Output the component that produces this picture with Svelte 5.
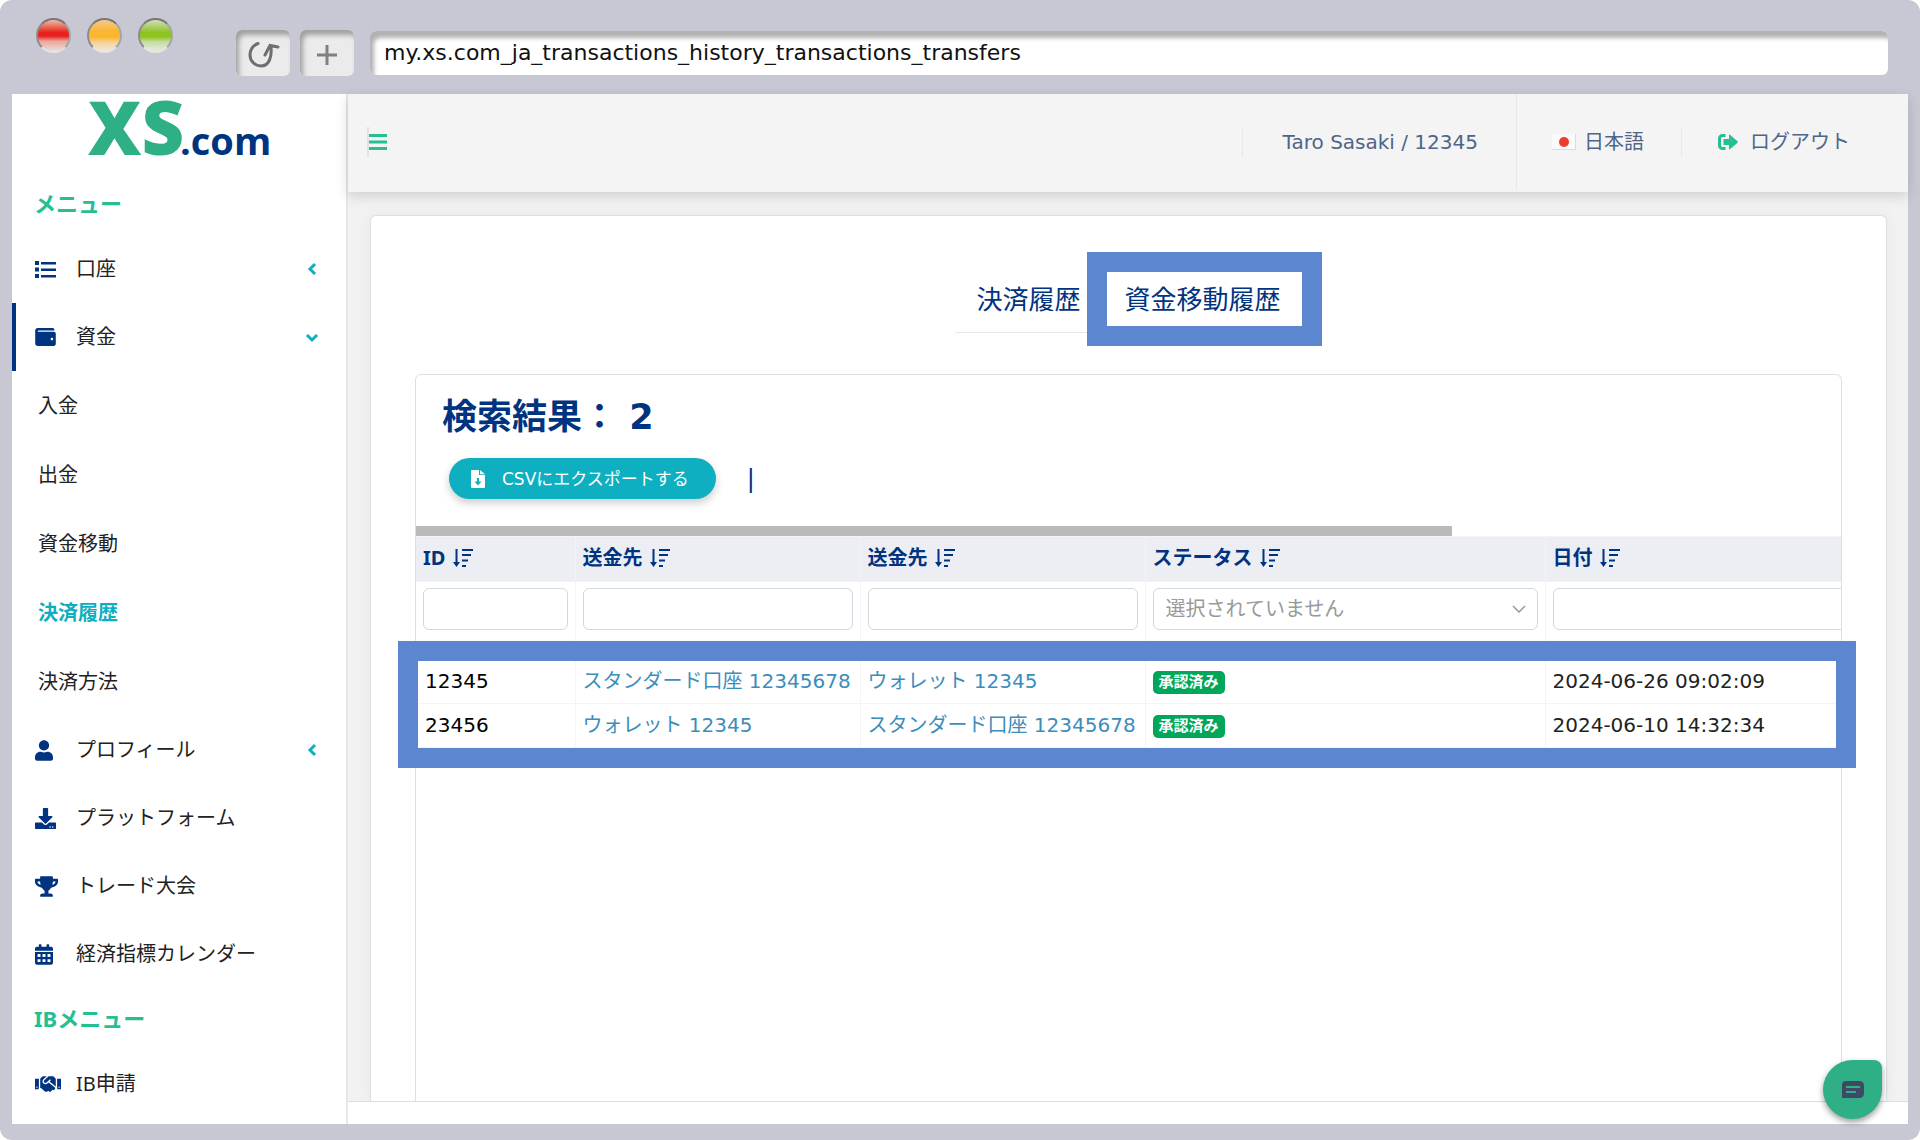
<script lang="ts">
  type Icon = { box: string; width: number; height: number; d: string };

  const icons: Record<string, Icon> = {
    list: {
      box: '0 0 21 17', width: 21, height: 17,
      d: 'M0 0h4v4H0zM6 1h15v2.500H6zM0 6.500h4v4H0zM6 7.500h15v2.500H6zM0 13h4v4H0zM6 14h15v2.500H6z',
    },
    wallet: {
      box: '0 32 512 448', width: 21, height: 18,
      d: 'M461.200 128H80c-8.840 0-16-7.160-16-16s7.160-16 16-16h384c8.840 0 16-7.160 16-16 0-26.510-21.490-48-48-48H64C28.650 32 0 60.650 0 96v320c0 35.350 28.650 64 64 64h397.200c28.020 0 50.800-21.530 50.800-48V176c0-26.470-22.780-48-50.800-48zM416 336c-17.670 0-32-14.330-32-32s14.330-32 32-32 32 14.330 32 32-14.330 32-32 32z',
    },
    user: {
      box: '0 0 448 512', width: 18, height: 21,
      d: 'M224 256c70.700 0 128-57.300 128-128S294.700 0 224 0 96 57.300 96 128s57.300 128 128 128zm89.600 32h-16.700c-22.200 10.200-46.900 16-72.900 16s-50.600-5.800-72.900-16h-16.700C60.200 288 0 348.200 0 422.400V464c0 26.500 21.500 48 48 48h352c26.500 0 48-21.500 48-48v-41.600c0-74.200-60.200-134.400-134.400-134.400z',
    },
    download: {
      box: '0 0 512 512', width: 21, height: 21,
      d: 'M216 0h80c13.300 0 24 10.700 24 24v168h87.700c17.800 0 26.700 21.500 14.100 34.100L269.700 378.300c-7.500 7.500-19.800 7.500-27.300 0L90.100 226.100c-12.600-12.600-3.700-34.100 14.100-34.100H192V24c0-13.300 10.700-24 24-24zm296 376v112c0 13.300-10.700 24-24 24H24c-13.300 0-24-10.700-24-24V376c0-13.300 10.700-24 24-24h146.700l49 49c20.100 20.100 52.500 20.100 72.600 0l49-49H488c13.300 0 24 10.700 24 24zm-124 88c0-11-9-20-20-20s-20 9-20 20 9 20 20 20 20-9 20-20zm64 0c0-11-9-20-20-20s-20 9-20 20 9 20 20 20 20-9 20-20z',
    },
    trophy: {
      box: '0 0 576 512', width: 23, height: 21,
      d: 'M552 64H448V24c0-13.300-10.700-24-24-24H152c-13.300 0-24 10.700-24 24v40H24C10.700 64 0 74.700 0 88v56c0 35.700 22.500 72.400 61.900 100.700 31.500 22.700 69.800 37.100 110 41.700C203.300 338.500 240 360 240 360v72h-48c-35.300 0-64 20.700-64 56v12c0 6.600 5.400 12 12 12h296c6.600 0 12-5.400 12-12v-12c0-35.300-28.700-56-64-56h-48v-72s36.700-21.500 68.100-73.600c40.300-4.600 78.600-19 110-41.700 39.300-28.300 61.900-65 61.900-100.700V88c0-13.300-10.700-24-24-24zM99.300 192.800C74.900 175.200 64 155.600 64 144v-16h64.200c1 32.600 5.800 61.200 12.800 86.200-15.100-5.200-29.200-12.400-41.700-21.400zM512 144c0 16.100-17.700 36.100-35.300 48.800-12.500 9-26.700 16.200-41.800 21.400 7-25 11.800-53.600 12.800-86.200H512v16z',
    },
    calendar: {
      box: '0 0 448 512', width: 18, height: 21,
      d: 'M0 192h448v272c0 26.500-21.500 48-48 48H48c-26.500 0-48-21.500-48-48zM64 244v72h72v-72zM188 244v72h72v-72zM312 244v72h72v-72zM64 372v72h72v-72zM188 372v72h72v-72zM312 372v72h72v-72zM400 64h-48V16c0-8.800-7.200-16-16-16h-32c-8.800 0-16 7.200-16 16v48H160V16c0-8.800-7.200-16-16-16h-32c-8.800 0-16 7.200-16 16v48H48C21.500 64 0 85.500 0 112v48h448v-48c0-26.500-21.500-48-48-48z',
    },
    handshake: {
      box: '0 64 640 384', width: 26, height: 16,
      d: 'M434.700 64h-85.900c-8 0-15.700 3-21.600 8.400l-98.300 90c-.1.1-.2.3-.3.4-16.600 15.600-16.300 40.500-2.100 56 12.700 13.900 39.400 17.600 56.100 2.700.1-.1.3-.1.4-.2l79.900-73.200c6.500-5.900 16.700-5.500 22.600 1 6 6.500 5.500 16.600-1 22.600l-26.100 23.900L504 313.800c2.900 2.400 5.500 5 7.900 7.700V128l-54.600-54.600c-5.900-6-14.100-9.400-22.600-9.400zM544 128.200v223.900c0 17.700 14.300 32 32 32h64V128.200h-96zm48 223.900c-8.800 0-16-7.200-16-16s7.200-16 16-16 16 7.200 16 16-7.200 16-16 16zM0 384h64c17.700 0 32-14.300 32-32V128.200H0V384zm48-63.900c8.800 0 16 7.200 16 16s-7.200 16-16 16-16-7.200-16-16c0-8.900 7.200-16 16-16zm435.900 18.600L334.600 217.500l-30 27.500c-29.700 27.100-75.200 24.500-101.700-4.400-26.900-29.400-24.800-74.900 4.400-101.700L289.100 64h-83.800c-8.500 0-16.600 3.400-22.600 9.400L128 128v223.900h18.300l90.500 81.900c27.400 22.300 67.700 18.100 90-9.300l.2-.2 17.900 15.500c15.900 13 39.400 10.500 52.300-5.400l31.400-38.600 5.400 4.400c13.700 11.100 33.900 9.100 45-4.700l9.500-11.700c11.200-13.800 9.100-33.900-4.600-45.100z',
    },
  };

  type MenuItem = {
    label: string;
    icon?: string;
    open?: boolean;
    sub?: boolean;
    current?: boolean;
  };

  const menu: MenuItem[] = [
    { label: '口座', icon: 'list', open: false },
    { label: '資金', icon: 'wallet', open: true },
    { label: '入金', sub: true },
    { label: '出金', sub: true },
    { label: '資金移動', sub: true },
    { label: '決済履歴', sub: true, current: true },
    { label: '決済方法', sub: true },
    { label: 'プロフィール', icon: 'user', open: false },
    { label: 'プラットフォーム', icon: 'download' },
    { label: 'トレード大会', icon: 'trophy' },
    { label: '経済指標カレンダー', icon: 'calendar' },
  ];
  const ibMenu: MenuItem[] = [{ label: 'IB申請', icon: 'handshake' }];

  const columns = ['ID', '送金先', '送金先', 'ステータス', '日付'];

  const rows = [
    { id: '12345', from: 'スタンダード口座 12345678', to: 'ウォレット 12345', status: '承認済み', date: '2024-06-26 09:02:09' },
    { id: '23456', from: 'ウォレット 12345', to: 'スタンダード口座 12345678', status: '承認済み', date: '2024-06-10 14:32:34' },
  ];

  let address = $state('my.xs.com_ja_transactions_history_transactions_transfers');
</script>

{#snippet menuRow(item: MenuItem)}
  <li>
    <a href="#menu" class="menu-row" class:sub={item.sub} class:open={item.open} class:current={item.current}>
      {#if item.icon}
        {@const icon = icons[item.icon]}
        <span class="menu-icon">
          <svg viewBox={icon.box} width={icon.width} height={icon.height} aria-hidden="true">
            <path d={icon.d} fill="currentColor" fill-rule="evenodd" />
          </svg>
        </span>
      {/if}
      <span class="menu-label">{item.label}</span>
      {#if item.open !== undefined}
        <svg class="chevron" viewBox="0 0 14 14" width="14" height="14" aria-hidden="true">
          <path d={item.open ? 'M2 5l5 5 5-5' : 'M10 2L5 7l5 5'} />
        </svg>
      {/if}
    </a>
  </li>
{/snippet}

<div class="browser">
  <div class="toolbar">
    <div class="lights">
      <span class="light red"></span>
      <span class="light yellow"></span>
      <span class="light green"></span>
    </div>
    <button class="tool" aria-label="Reload">
      <svg viewBox="0 0 36 32" width="36" height="32" fill="none" stroke="#6e6e6e" stroke-width="3" aria-hidden="true">
        <path d="M13 4.500C8 6 5 11 5 16C5 22 10 27 16 27C24 27 27 18 26 8M20 16L25 6.500L33 8" stroke-linecap="round" />
      </svg>
    </button>
    <button class="tool" aria-label="New tab">
      <svg viewBox="0 0 22 22" width="22" height="22" fill="none" stroke="#808080" stroke-width="3" aria-hidden="true">
        <path d="M11 1v20M1 11h20" />
      </svg>
    </button>
    <input class="address" aria-label="Address" bind:value={address} />
  </div>

  <div class="page">
    <aside class="sidebar">
      <a class="logo" href="#home" aria-label="XS.com">
        <svg viewBox="0 0 190 58" width="190" height="58">
          <text class="logo-xs" x="0" y="55">XS</text>
          <text class="logo-com" x="92" y="55">.com</text>
        </svg>
      </a>
      <h2>メニュー</h2>
      <ul>
        {#each menu as item}
          {@render menuRow(item)}
        {/each}
      </ul>
      <h2>IBメニュー</h2>
      <ul>
        {#each ibMenu as item}
          {@render menuRow(item)}
        {/each}
      </ul>
    </aside>

    <div class="main">
      <header>
        <button class="hamburger" aria-label="Menu">
          <svg viewBox="0 0 18 16" width="18" height="16" aria-hidden="true">
            <path d="M0 0h18v3H0zM0 6.500h18v3H0zM0 13h18v3H0z" fill="#26bf94" />
          </svg>
        </button>
        <a class="account" href="#account">Taro Sasaki / 12345</a>
        <a class="language" href="#language">
          <svg viewBox="0 0 24 16" width="24" height="16" aria-hidden="true">
            <rect width="24" height="16" fill="#dcdcdc" />
            <rect width="23" height="15" fill="#fafafa" />
            <circle cx="12" cy="8" r="5" fill="#ee3d2c" />
          </svg>
          日本語
        </a>
        <a class="logout" href="#logout">
          <svg viewBox="0 0 20 16" width="20" height="16" aria-hidden="true">
            <path d="M7.500 1.500H4.500a3 3 0 0 0-3 3v7a3 3 0 0 0 3 3H7.500" fill="none" stroke="#26bf94" stroke-width="3" />
            <path d="M5.500 5H11V1.500Q11 0 12.200 1L19.500 7.300Q20 8 19.500 8.700L12.200 15Q11 16 11 14.500V11H5.500z" fill="#26bf94" />
          </svg>
          ログアウト
        </a>
      </header>

      <div class="content">
        <section class="card">
          <nav class="tabs">
            <a href="#payments">決済履歴</a>
            <a href="#transfers" class="marked">資金移動履歴</a>
          </nav>

          <div class="panel">
            <h1>検索結果： 2</h1>
            <div class="actions">
              <button class="export">
                <svg viewBox="0 0 14 18" width="14" height="18" aria-hidden="true">
                  <path d="M0 1Q0 0 1 0H8V5H14V17Q14 18 13 18H1Q0 18 0 17ZM6 8V11.500H3.500L7 15.500L10.500 11.500H8V8ZM9 0L14 4.200H9Z" fill="#fff" fill-rule="evenodd" />
                </svg>
                CSVにエクスポートする
              </button>
              <span>|</span>
            </div>

            <div class="scrollbar"><div class="thumb"></div></div>
            <div class="table-area">
              <div class="table-wrap">
                <table>
                  <colgroup>
                    <col class="col-id" />
                    <col class="col-account" />
                    <col class="col-account" />
                    <col class="col-status" />
                    <col />
                  </colgroup>
                  <thead>
                    <tr>
                      {#each columns as column}
                        <th scope="col">
                          {column}
                          <svg viewBox="0 0 20 18" width="20" height="18" aria-hidden="true">
                            <path d="M2.500 0h2v13H7L3.500 18L0 13h2.500zM9 0h11v2H9zM9 5h9v2H9zM9 10.500h6v2H9zM9 16h4v2H9z" fill="currentColor" />
                          </svg>
                        </th>
                      {/each}
                    </tr>
                    <tr class="filters">
                      {#each columns as column}
                        <td>
                          {#if column === 'ステータス'}
                            <div class="select">
                              <select aria-label={column}>
                                <option>選択されていません</option>
                              </select>
                              <svg viewBox="0 0 14 8" width="14" height="8" aria-hidden="true">
                                <path d="M1 1l6 6 6-6" fill="none" stroke="#999" stroke-width="1.500" />
                              </svg>
                            </div>
                          {:else}
                            <input type="text" aria-label={column} />
                          {/if}
                        </td>
                      {/each}
                    </tr>
                  </thead>
                  <tbody>
                    {#each rows as row}
                      <tr>
                        <td class="id">{row.id}</td>
                        <td><a href="#account">{row.from}</a></td>
                        <td><a href="#account">{row.to}</a></td>
                        <td><span class="badge">{row.status}</span></td>
                        <td>{row.date}</td>
                      </tr>
                    {/each}
                  </tbody>
                </table>
              </div>
              <div class="rows-mark"></div>
            </div>
          </div>
        </section>
      </div>

      <footer></footer>
      <button class="chat" aria-label="Chat">
        <svg viewBox="0 0 22 17" width="22" height="17" aria-hidden="true">
          <path d="M4 0H17Q22 0 22 5V12Q22 17 17 17H0V4Q0 0 4 0Z" fill="#3d4965" />
          <path d="M4 6h14M4 11h10" stroke="#2eaf86" stroke-width="2" />
        </svg>
      </button>
    </div>
  </div>
</div>

<style>
  :global(body) {
    margin: 0;
    background: #fff;
  }

  .browser {
    --navy: #003380;
    --green: #26bf94;
    --teal: #0dafc0;
    --line: #dcdfe6;
    --mark: #5c86d0;
    display: flex;
    flex-direction: column;
    box-sizing: border-box;
    min-height: 100vh;
    padding: 0 12px 16px;
    border-radius: 12px;
    background: #c8c8d4;
    color: #222;
    font-family: 'DejaVu Sans', 'Noto Sans CJK JP', sans-serif;
    font-size: 20px;
    line-height: 28px;
  }

  a {
    color: inherit;
    text-decoration: none;
  }

  button,
  input,
  select {
    box-sizing: border-box;
    margin: 0;
    font: inherit;
  }

  svg {
    flex: none;
  }

  /* browser bar */
  .toolbar {
    display: flex;
    align-items: center;
    gap: 10px;
    box-sizing: border-box;
    height: 94px;
    padding: 12px 20px 0 24px;
  }

  .lights {
    display: flex;
    gap: 16px;
    align-self: flex-start;
    margin: 6px 53px 0 0;
  }

  .light {
    box-sizing: border-box;
    width: 35px;
    height: 35px;
    border: 2px solid;
    border-color: #777 #a5a5a5 #e4e4e4 #8c8c8c;
    border-radius: 50%;
  }

  .red {
    background: linear-gradient(#efb9b0, #e8604a 25%, #e8211f 40%, #e8211f 52%, #eba59b 68%, #ecdcd9);
  }

  .yellow {
    background: linear-gradient(#f6c98a, #f8b838 35%, #fbb52b 55%, #f6d398 72%, #efe7dc);
  }

  .green {
    background: linear-gradient(#cfe2b4, #a2ca55 28%, #8fc31f 40%, #8fc31f 54%, #c5dca0 70%, #e6eadf);
  }

  .tool {
    display: flex;
    align-items: center;
    justify-content: center;
    width: 54px;
    height: 46px;
    padding: 4px 0 0;
    border: 0;
    border-radius: 6px;
    background: #ebebeb;
    box-shadow: inset 3px 5px 5px #a0a0a0;
  }

  .address {
    flex: 1;
    min-width: 0;
    height: 44px;
    margin-left: 6px;
    padding: 0 14px 2px;
    border: 0;
    border-radius: 6px;
    background: #fff;
    box-shadow: inset 4px 7px 4px #b2b2b2;
    color: #111;
    font-size: 22px;
  }

  .page {
    display: flex;
    flex: 1;
    background: #fff;
  }

  /* sidebar */
  .sidebar {
    flex: none;
    box-sizing: border-box;
    width: 336px;
    padding-bottom: 4px;
    border-right: 2px solid #e6e7e9;
  }

  .logo {
    display: flex;
    box-sizing: border-box;
    height: 79px;
    padding: 6px 0 0 76px;
  }

  .logo svg {
    overflow: visible;
  }

  .logo-xs {
    fill: #2eaf86;
    font: 800 74px 'Open Sans', sans-serif;
  }

  .logo-com {
    fill: var(--navy);
    font: 700 38px 'Open Sans', sans-serif;
  }

  h2 {
    height: 62px;
    margin: 0;
    padding-left: 22px;
    color: var(--green);
    font: 700 22px/60px 'Noto Sans', 'Noto Sans CJK JP', sans-serif;
  }

  ul {
    margin: 0;
    padding: 0;
    list-style: none;
  }

  .menu-row {
    display: flex;
    align-items: center;
    box-sizing: border-box;
    height: 68px;
    padding: 0 27px 0 19px;
    border-left: 4px solid transparent;
  }

  .menu-row.open {
    border-color: var(--navy);
  }

  .menu-row.sub {
    height: 69px;
    padding-left: 22px;
  }

  .menu-row.current {
    color: var(--teal);
    font-weight: 700;
  }

  .menu-icon {
    display: flex;
    width: 41px;
    color: var(--navy);
  }

  .menu-label {
    flex: 1;
    font-family: 'Noto Sans', 'Noto Sans CJK JP', sans-serif;
  }

  .chevron {
    fill: none;
    stroke: var(--teal);
    stroke-width: 3;
  }

  /* top bar */
  .main {
    position: relative;
    display: flex;
    flex: 1;
    flex-direction: column;
    min-width: 0;
    background: #f2f2f2;
  }

  header {
    z-index: 1;
    display: flex;
    align-items: center;
    box-sizing: border-box;
    height: 98px;
    padding: 0 58px 2px 19px;
    background: #f4f4f4;
    box-shadow: 0 4px 12px rgba(0, 0, 0, 0.15);
    color: #4f6588;
  }

  .hamburger {
    display: flex;
    align-items: center;
    height: 30px;
    margin-right: auto;
    padding: 0;
    border: 0;
    border-left: 2px solid #e2e2e2;
    background: none;
  }

  .account,
  .language,
  .logout {
    display: flex;
    align-items: center;
    height: 30px;
    padding: 0 38px 0 40px;
    border-left: 1px solid #e8e8e8;
  }

  .language {
    gap: 8px;
    height: 96px;
    padding: 0 37px 0 35px;
  }

  .logout {
    gap: 12px;
    padding: 0 0 0 36px;
  }

  /* content */
  .content {
    display: flex;
    flex: 1;
    padding: 23px 21px 0 22px;
  }

  .card {
    display: flex;
    flex: 1;
    flex-direction: column;
    min-width: 0;
    padding: 36px 44px 0;
    border: 1px solid var(--line);
    border-bottom: 0;
    border-radius: 6px 6px 0 0;
    background: #fff;
    box-shadow: 0 0 16px rgba(0, 0, 0, 0.05);
  }

  .tabs {
    display: flex;
    gap: 2px;
    align-self: center;
    margin-bottom: 41px;
    color: var(--navy);
    font-size: 26px;
    line-height: 64px;
  }

  .tabs a {
    position: relative;
    padding: 16px 21px 0;
    border-bottom: 1px solid #e6e8ef;
  }

  .marked::after {
    content: '';
    position: absolute;
    inset: 0 -20px -14px -17px;
    border: 20px solid var(--mark);
  }

  .panel {
    flex: 1;
    border: 1px solid var(--line);
    border-bottom: 0;
    border-radius: 6px 6px 0 0;
  }

  h1 {
    margin: 0;
    padding: 16px 0 0 26px;
    color: var(--navy);
    font-size: 35px;
    line-height: 52px;
  }

  .actions {
    display: flex;
    align-items: center;
    gap: 31px;
    margin: 15px 0 27px 33px;
    color: var(--navy);
    font-size: 24px;
  }

  .export {
    display: flex;
    align-items: center;
    gap: 17px;
    height: 41px;
    padding: 0 27px 0 22px;
    border: 0;
    border-radius: 21px;
    background: var(--teal);
    box-shadow: 0 4px 8px rgba(0, 0, 0, 0.2);
    color: #fff;
    font-size: 17px;
  }

  .scrollbar {
    height: 10px;
  }

  .thumb {
    width: calc(73% - 4px);
    height: 100%;
    background: #bababa;
  }

  .table-area {
    position: relative;
  }

  .table-wrap {
    overflow: hidden;
  }

  table {
    width: 138%;
    border-collapse: collapse;
    table-layout: fixed;
  }

  .col-id {
    width: 159px;
  }

  .col-account {
    width: 285px;
  }

  .col-status {
    width: 400px;
  }

  th,
  td {
    box-sizing: border-box;
    height: 44px;
    padding: 0 7px 2px;
    border: solid #f3f4f6;
    border-width: 1px 1px 1px 0;
    text-align: left;
    white-space: nowrap;
  }

  th {
    height: 45px;
    background: #edeef3;
    color: var(--navy);
    font-family: 'Noto Sans', 'Noto Sans CJK JP', sans-serif;
  }

  th svg {
    margin-left: 2px;
    vertical-align: -2px;
  }

  .filters td {
    height: 78px;
    padding-top: 6px;
    vertical-align: top;
  }

  .filters input,
  select {
    display: block;
    width: 100%;
    height: 42px;
    border: 1px solid #d3d7df;
    border-radius: 6px;
    background: #fff;
  }

  .select {
    position: relative;
  }

  select {
    padding: 0 12px;
    appearance: none;
    color: #999;
  }

  .select svg {
    position: absolute;
    top: 17px;
    right: 12px;
    pointer-events: none;
  }

  td a {
    color: #3c8dbc;
  }

  td.id {
    padding-left: 9px;
    color: #000;
  }

  .badge {
    display: inline-block;
    padding: 0 6px;
    border-radius: 5px;
    background: #00a65a;
    color: #fff;
    font-size: 15px;
    font-weight: 700;
    line-height: 23px;
    vertical-align: middle;
  }

  .rows-mark {
    position: absolute;
    right: -15px;
    bottom: -20px;
    left: -18px;
    height: 87px;
    border: 20px solid var(--mark);
  }

  footer {
    height: 22px;
    border-top: 1px solid var(--line);
    background: #fff;
  }

  .chat {
    position: absolute;
    right: 26px;
    bottom: 5px;
    display: flex;
    align-items: center;
    justify-content: center;
    width: 59px;
    height: 59px;
    padding: 0;
    border: 0;
    border-radius: 50% 8px 50% 50%;
    background: #2eaf86;
    box-shadow: 0 3px 6px rgba(0, 0, 0, 0.4);
  }
</style>
